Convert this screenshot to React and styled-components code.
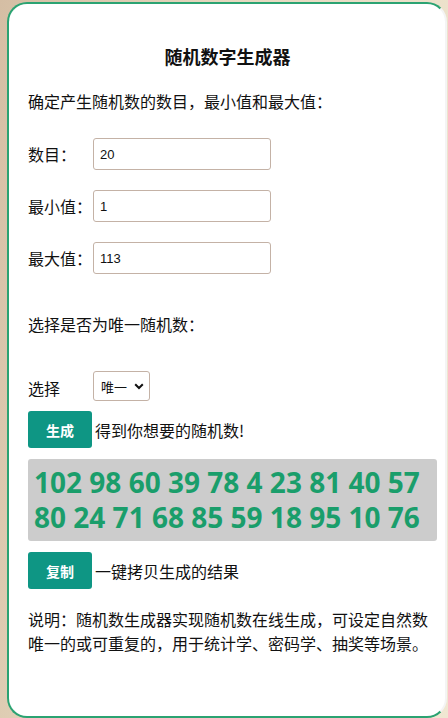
import React from 'react'
import styled, { createGlobalStyle } from 'styled-components'

const GlobalStyle = createGlobalStyle`
  html, body {
    margin: 0;
    padding: 0;
  }
  body {
    font-family: "Noto Sans CJK SC", "Noto Sans", sans-serif;
    background: linear-gradient(100deg, #d5bea4 0%, #e6d8bf 40%, #f0e7d2 100%);
    min-height: 718px;
  }
`;

const chevron = "data:image/svg+xml;utf8,<svg xmlns='http://www.w3.org/2000/svg' width='10' height='7' viewBox='0 0 10 7'><path d='M1.2 1.2 L5 5 L8.8 1.2' fill='none' stroke='%23111' stroke-width='2'/></svg>"

const Page = styled.div`
  padding: 2px 1px 0 7px;
`;

const Card = styled.div`
  box-sizing: border-box;
  height: 716px;
  background: #fff;
  border: 2px solid #2ba372;
  border-right-color: #f4f4f4;
  border-radius: 20px;
  padding: 38px 8px 0 19px;
  color: #111;
`;

const Title = styled.h1`
  margin: 2px 0 0;
  padding-right: 10px;
  font-size: 18px;
  line-height: 24px;
  font-weight: 700;
  text-align: center;
`;

const Para = styled.p`
  margin: ${p => p.$top}px 0 0;
  font-size: 16px;
  line-height: 24px;
`;

const Fields = styled.div`
  margin-top: 25px;
  display: flex;
  flex-direction: column;
  gap: 20px;
`;

const Row = styled.div`
  display: flex;
  align-items: center;
  margin-top: ${p => p.$top || 0}px;
`;

const Label = styled.span`
  width: 65px;
  font-size: 16px;
  line-height: 24px;
  padding-top: ${p => p.$drop || 0}px;
`;

const Input = styled.input`
  box-sizing: border-box;
  width: 178px;
  height: 32px;
  border: 1px solid #c4b2a6;
  border-radius: 3px;
  padding: 0 6px;
  font-family: "Liberation Sans", Arial, sans-serif;
  font-size: 13px;
  color: #111;
  outline: none;
`;

const Select = styled.select`
  box-sizing: border-box;
  width: 57px;
  height: 30px;
  border: 1px solid #c4b2a6;
  border-radius: 3px;
  appearance: none;
  background: #fff url("${chevron}") no-repeat right 5px center;
  padding: 0 16px 0 7px;
  font-family: "Noto Sans CJK SC", sans-serif;
  font-size: 13px;
  color: #111;
`;

const Button = styled.button`
  width: 64px;
  height: 37px;
  border: none;
  border-radius: 3px;
  background: #0e9684;
  color: #fff;
  font-family: "Noto Sans CJK SC", sans-serif;
  font-size: 14px;
  font-weight: 700;
  margin-right: 3px;
  padding: 0;
`;

const Hint = styled.span`
  font-size: 16px;
  line-height: 24px;
`;

const Result = styled.div`
  margin-top: 11px;
  background: #cccccc;
  border-radius: 3px;
  padding: 6px 4px 6px 6px;
  font-family: "Noto Sans", sans-serif;
  font-weight: 700;
  font-size: 28px;
  line-height: 35px;
  color: #1a9e6b;
`;

const numbers = [102, 98, 60, 39, 78, 4, 23, 81, 40, 57, 80, 24, 71, 68, 85, 59, 18, 95, 10, 76]

export default function App() {
  return (
    <Page>
      <GlobalStyle />
      <Card>
        <Title>随机数字生成器</Title>
        <Para $top={21}>确定产生随机数的数目，最小值和最大值：</Para>
        <Fields>
          <Row>
            <Label>数目：</Label>
            <Input defaultValue="20" />
          </Row>
          <Row>
            <Label>最小值：</Label>
            <Input defaultValue="1" />
          </Row>
          <Row>
            <Label>最大值：</Label>
            <Input defaultValue="113" />
          </Row>
        </Fields>
        <Para $top={38}>选择是否为唯一随机数：</Para>
        <Row $top={35}>
          <Label $drop={4}>选择</Label>
          <Select defaultValue="unique">
            <option value="unique">唯一</option>
            <option value="repeat">可重复</option>
          </Select>
        </Row>
        <Row $top={10}>
          <Button>生成</Button>
          <Hint>得到你想要的随机数!</Hint>
        </Row>
        <Result>{numbers.join(' ')}</Result>
        <Row $top={11}>
          <Button>复制</Button>
          <Hint>一键拷贝生成的结果</Hint>
        </Row>
        <Para $top={18}>说明：随机数生成器实现随机数在线生成，可设定自然数唯一的或可重复的，用于统计学、密码学、抽奖等场景。</Para>
      </Card>
    </Page>
  )
}
